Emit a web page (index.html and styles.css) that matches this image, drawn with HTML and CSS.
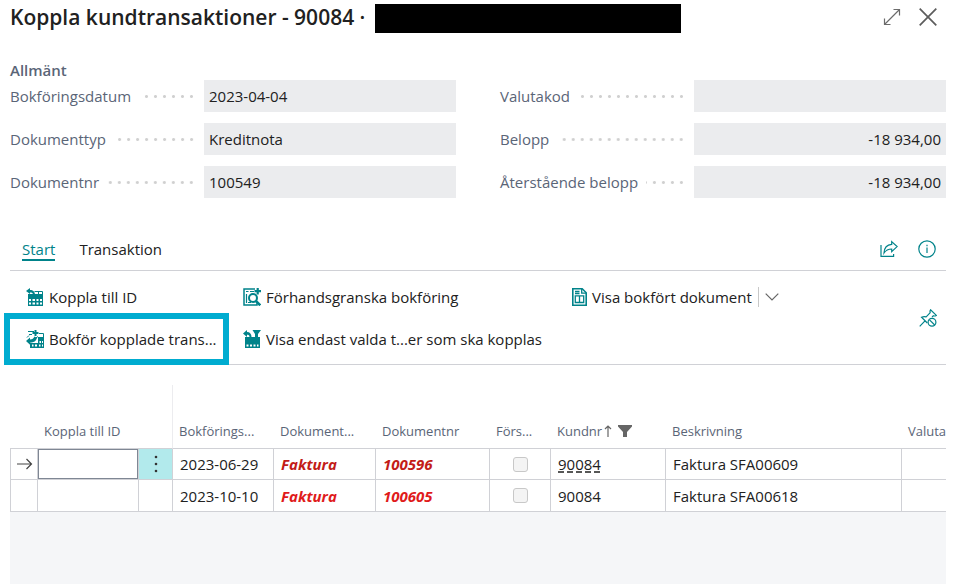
FILE: index.html
```html
<!DOCTYPE html>
<html lang="sv">
<head>
  <meta charset="UTF-8">
  <meta name="viewport" content="width=device-width, initial-scale=1.0">
  <title>Koppla kundtransaktioner</title>
  <link rel="stylesheet" href="styles.css">
</head>
<body>
  <div class="dialog">
    <!-- Title bar -->
    <header class="titlebar">
      <h1>Koppla kundtransaktioner - 90084 ·</h1>
      <div class="redacted"></div>
      <div class="window-buttons">
        <button type="button" aria-label="Expandera">
          <svg width="18" height="18" viewBox="0 0 18 18" fill="none" stroke="#6b6b6b" stroke-width="1.2"><path d="M1.5 16.5l15-15M10.5 1.5h6v6M1.5 10.5v6h6"/></svg>
        </button>
        <button type="button" aria-label="Stäng">
          <svg width="18" height="18" viewBox="0 0 18 18" fill="none" stroke="#5c5c5c" stroke-width="1.7"><path d="M.7.7l16.6 16.6M17.3.7L.7 17.3"/></svg>
        </button>
      </div>
    </header>

    <!-- General fields -->
    <section class="general">
      <h2>Allmänt</h2>
      <div class="fields">
        <div class="field">
          <label for="posting-date">Bokföringsdatum</label>
          <input id="posting-date" type="text" value="2023-04-04" readonly>
        </div>
        <div class="field">
          <label for="currency">Valutakod</label>
          <input id="currency" type="text" readonly>
        </div>
        <div class="field">
          <label for="doc-type">Dokumenttyp</label>
          <input id="doc-type" type="text" value="Kreditnota" readonly>
        </div>
        <div class="field">
          <label for="amount">Belopp</label>
          <input id="amount" class="number" type="text" value="-18 934,00" readonly>
        </div>
        <div class="field">
          <label for="doc-no">Dokumentnr</label>
          <input id="doc-no" type="text" value="100549" readonly>
        </div>
        <div class="field">
          <label for="remaining">Återstående belopp</label>
          <input id="remaining" class="number" type="text" value="-18 934,00" readonly>
        </div>
      </div>
    </section>

    <!-- Tabs -->
    <nav class="tabs">
      <button type="button" class="tab active">Start</button>
      <button type="button" class="tab">Transaktion</button>
      <div class="tab-tools">
        <button type="button" aria-label="Dela">
          <svg width="18" height="18" viewBox="0 0 18 18" fill="none" stroke="#00838a" stroke-width="1.2"><path d="M1 5v11.4h12.6V14"/><path d="M11.7 1.6l5.4 5-5.4 5V9C8.3 9 6 10 4 13c.3-5.4 3.6-8.4 7.7-8.6z"/></svg>
        </button>
        <button type="button" aria-label="Information">
          <svg width="18" height="18" viewBox="0 0 18 18" fill="none" stroke="#00838a" stroke-width="1.2"><circle cx="9" cy="9" r="8.2"/><path d="M9 7.5V13M9 4.7v1.5"/></svg>
        </button>
      </div>
    </nav>

    <!-- Actions -->
    <div class="toolbar">
      <div class="actions">
        <button type="button" class="action">
          <svg width="18" height="18" viewBox="0 0 18 18"><path fill="#00838a" fill-rule="evenodd" d="M2 6h15v12H2zM3 11v2h2v-2zM6.500 11v2h2.500v-2zM10.500 11v2h2v-2zM14 11v2h2v-2zM3 14.500v2h2v-2zM6.500 14.500v2h2.500v-2zM10.500 14.500v2h2v-2zM14 14.500v2h2v-2z"/><path fill="none" stroke="#00838a" d="M8.500 3.500h8V8M12.500 3.500V7"/><path fill="#00838a" d="M0 3l4-3v2c3 0 5 1.500 5 5H7c0-2-1-2.500-3-2.500V6z"/></svg>
          Koppla till ID
        </button>
        <button type="button" class="action">
          <svg width="18" height="18" viewBox="0 0 18 18"><path fill="none" stroke="#00838a" stroke-width="1.5" d="M12 1H1v16h13v-2"/><path fill="none" stroke="#00838a" stroke-width="1.2" d="M3 3.500h2.500M7 3.500h4M3.500 6v9M5 14.500h3"/><circle cx="10" cy="10" r="4" fill="#fff" stroke="#00838a" stroke-width="2"/><path stroke="#00838a" stroke-width="2.600" d="M12.800 12.800L17.300 17.300"/><path stroke="#00838a" stroke-width="2.200" d="M14.700 0v6.500M11.500 3.200H18"/></svg>
          Förhandsgranska bokföring
        </button>
        <div class="split-action">
          <button type="button" class="action">
            <svg width="15" height="18" viewBox="0 0 15 18"><path fill="#fff" stroke="#00838a" stroke-width="1.6" d="M.8.8h9.400l4 4v12.400H.8z"/><path fill="none" stroke="#00838a" stroke-width="1.3" d="M9.700 1v4.200H14M3 3.500h4.500M3 5.500h4.500M3.300 7.800h8.400v6.700H3.300zM7.500 8v6.500"/></svg>
            Visa bokfört dokument
          </button>
          <button type="button" class="more" aria-label="Fler alternativ">
            <svg width="14" height="8" viewBox="0 0 14 8" fill="none" stroke="#666" stroke-width="1.2"><path d="M.7.7L7 7 13.3.7"/></svg>
          </button>
        </div>
        <button type="button" class="action highlighted">
          <svg width="18" height="18" viewBox="0 0 18 18"><path fill="none" stroke="#00838a" d="M13 3.500h4.500V8M2 1.500h6M3 4.500h3M1 7.500l2-2M9 8.500l3-2"/><path fill="#00838a" fill-rule="evenodd" d="M12 7h6v11H4v-5h8zM13.500 11v2H15v-2zM16 11v2h1v-2zM6 14.500v2h1.500v-2zM9 14.500v2h2v-2zM13 14.500v2h1.500v-2zM16 14.500v2h1v-2z"/><path stroke="#00838a" stroke-width="2" d="M9.500 0v6M6.500 3h6"/><path fill="#00838a" d="M0 11l4-3.500v2c2.500 0 3.500-1 4.500-3L11 8c-1 3-3 4.500-7 4.700v2z"/></svg>
          Bokför kopplade trans...
        </button>
        <button type="button" class="action">
          <svg width="18" height="18" viewBox="0 0 18 18"><path fill="#00838a" fill-rule="evenodd" d="M2 7h15v11H2zM3.500 14.500v2h2v-2zM7 14.500v2h2v-2zM10.500 14.500v2h2v-2zM14 14.500v2h1.500v-2z"/><path fill="#00838a" d="M9.500 0H18l-3 4v4h-3V4zM0 3.500L4 0v2c3 0 4.500 2 4.500 5H6.500C6.500 5 5.500 4.700 4 4.700V7z"/></svg>
          Visa endast valda t...er som ska kopplas
        </button>
      </div>
      <button type="button" class="pin" aria-label="Lossa">
        <svg width="18" height="18" viewBox="0 0 18 18" fill="none" stroke="#00838a" stroke-width="1.2"><path d="M.7 17.300l5.300-5.500M8.300 14L2.500 8.200c2-.9 3.500-.8 4.700-.3l4-4.200c-.4-1-.2-2 .4-2.900l5.700 5.600c-1 .6-2 .8-3 .4L13 8.200"/><circle cx="13" cy="13.300" r="3.900"/><path d="M10.300 10.600l5.400 5.400"/></svg>
      </button>
    </div>

    <!-- Lines -->
    <div class="grid">
      <table>
        <colgroup>
          <col class="col-marker">
          <col class="col-id">
          <col class="col-menu">
          <col class="col-date">
          <col class="col-type">
          <col class="col-no">
          <col class="col-check">
          <col class="col-customer">
          <col class="col-desc">
          <col>
        </colgroup>
        <thead>
          <tr>
            <th></th>
            <th>Koppla till ID</th>
            <th class="frozen-edge"></th>
            <th>Bokförings...</th>
            <th>Dokument...</th>
            <th>Dokumentnr</th>
            <th>Förs...</th>
            <th>
              <span class="sorted">Kundnr
                <svg width="8" height="12" viewBox="0 0 8 12" fill="none" stroke="#666" stroke-width="1.2"><path d="M4 12V1M1 4l3-3 3 3"/></svg>
                <svg class="filter" width="14" height="12" viewBox="0 0 14 12" fill="#666"><path d="M0 0h14v1.500L9 7v5H5V7L0 1.500z"/></svg>
              </span>
            </th>
            <th>Beskrivning</th>
            <th>Valutakod</th>
          </tr>
        </thead>
        <tbody>
          <tr class="selected">
            <td class="marker">
              <svg width="16" height="12" viewBox="0 0 16 12" fill="none" stroke="#444" stroke-width="1.2"><path d="M0 6h14.500M9.500 1l5 5-5 5"/></svg>
            </td>
            <td class="edit"><input type="text" aria-label="Koppla till ID"></td>
            <td class="menu">
              <button type="button" aria-label="Visa fler alternativ">
                <svg width="4" height="18" viewBox="0 0 4 18" fill="#333"><circle cx="2" cy="2" r="1.300"/><circle cx="2" cy="9" r="1.300"/><circle cx="2" cy="16" r="1.300"/></svg>
              </button>
            </td>
            <td>2023-06-29</td>
            <td class="overdue">Faktura</td>
            <td class="overdue">100596</td>
            <td class="check"><input type="checkbox" aria-label="Försenad" disabled></td>
            <td><a href="#">90084</a></td>
            <td>Faktura SFA00609</td>
            <td></td>
          </tr>
          <tr>
            <td></td>
            <td></td>
            <td></td>
            <td>2023-10-10</td>
            <td class="overdue">Faktura</td>
            <td class="overdue">100605</td>
            <td class="check"><input type="checkbox" aria-label="Försenad" disabled></td>
            <td>90084</td>
            <td>Faktura SFA00618</td>
            <td></td>
          </tr>
        </tbody>
      </table>
    </div>
  </div>
</body>
</html>
```
FILE: styles.css
```css
* {
  box-sizing: border-box;
}

body {
  margin: 0;
  font-family: "Open Sans", "Noto Sans", sans-serif;
  font-size: 15px;
  line-height: 20px;
  color: #212121;
  background: #fff;
}

button,
input {
  font: inherit;
  color: inherit;
}

button {
  padding: 0;
  border: none;
  background: none;
  cursor: pointer;
}

svg {
  display: block;
  flex: none;
}

.dialog {
  display: flex;
  flex-direction: column;
  min-height: 100vh;
  padding: 0 9px 0 10px;
}

/* Title bar */
.titlebar {
  display: flex;
  align-items: center;
  height: 36px;
}

.titlebar h1 {
  margin: 0 10px 0 0;
  padding-bottom: 2px;
  font-size: 21px;
  line-height: 32px;
  font-weight: 600;
  white-space: nowrap;
}

.redacted {
  width: 306px;
  height: 29px;
  background: #000;
}

.window-buttons {
  display: flex;
  gap: 18px;
  margin-left: auto;
  padding: 0 9px 2px 0;
}

/* General fields */
.general {
  padding-top: 24px;
}

.general h2 {
  margin: 0;
  font-size: 15px;
  line-height: 20px;
  font-weight: 600;
  color: #5a6577;
}

.fields {
  display: grid;
  grid-template-columns: 1fr 1fr;
  gap: 11px 44px;
}

.field {
  display: grid;
  grid-template-columns: 194px 1fr;
}

.field label {
  display: flex;
  align-items: center;
  gap: 8px;
  padding-right: 8px;
  color: #5a6577;
  white-space: nowrap;
}

.field label::after {
  content: "";
  flex: 1;
  height: 3px;
  background: radial-gradient(circle, #d0d0d0 1px, transparent 2px) right center / 9px 3px;
}

.field input {
  width: 100%;
  height: 32px;
  padding: 0 5px;
  border: none;
  background: #ebecee;
}

.field .number {
  text-align: right;
}

/* Tabs */
.tabs {
  display: flex;
  align-items: center;
  gap: 24px;
  height: 44px;
  margin-top: 29px;
  padding: 0 10px 0 12px;
  border-bottom: 1px solid #d0d1d6;
}

.tab {
  border-top: 2px solid transparent;
  border-bottom: 2px solid transparent;
}

.tab.active {
  color: #00838a;
  border-bottom-color: #00838a;
}

.tab-tools {
  display: flex;
  gap: 20px;
  margin-left: auto;
}

/* Actions */
.toolbar {
  display: flex;
  align-items: center;
  justify-content: space-between;
  padding: 5px 9px 4px 16px;
  border-bottom: 1px solid #d0d1d6;
}

.actions {
  display: grid;
  grid-template-columns: 217px 329px auto;
  grid-auto-rows: 42px;
}

.action {
  display: flex;
  align-items: center;
  gap: 5px;
  white-space: nowrap;
}

.split-action {
  display: flex;
  align-items: center;
}

.more {
  height: 20px;
  margin-left: 6px;
  padding-left: 6px;
  border-left: 1px solid #c8c8c8;
}

.highlighted {
  position: relative;
}

.highlighted::after {
  content: "";
  position: absolute;
  inset: -5px 14px -5px -22px;
  border: 6px solid #00acd0;
}

/* Lines */
.grid {
  flex: 1;
  margin-top: 20px;
  overflow: hidden;
  background: #f5f6f8;
}

table {
  width: 100%;
  table-layout: fixed;
  border-collapse: separate;
  border-spacing: 0;
  background: #fff;
}

.col-marker {
  width: 28px;
}

.col-id,
.col-date {
  width: 101px;
}

.col-menu {
  width: 34px;
}

.col-type {
  width: 102px;
}

.col-no {
  width: 114px;
}

.col-check {
  width: 61px;
}

.col-customer {
  width: 115px;
}

.col-desc {
  width: 236px;
}

th {
  height: 64px;
  padding: 0 0 7px 6px;
  border-bottom: 1px solid #d0d1d6;
  font-size: 13px;
  font-weight: 400;
  text-align: left;
  vertical-align: bottom;
  white-space: nowrap;
  overflow: hidden;
  color: #5a6577;
}

.frozen-edge {
  border-right: 1px solid #ececef;
}

.sorted {
  display: flex;
  align-items: center;
  gap: 2px;
}

.filter {
  margin-left: 4px;
}

td {
  height: 32px;
  padding: 0 0 0 7px;
  border-right: 1px solid #d0d1d6;
  border-bottom: 1px solid #d0d1d6;
  white-space: nowrap;
}

.selected td {
  height: 31px;
}

td:first-child {
  border-left: 1px solid #d0d1d6;
}

td:last-child {
  border-right: none;
}

td.marker {
  padding-left: 6px;
}

td.edit,
td.menu,
td.check {
  padding: 0;
}

.edit input {
  display: block;
  width: 100%;
  height: 30px;
  border: 1px solid #7f8794;
  background: #fff;
}

.menu {
  background: #b2eaec;
}

.menu button {
  display: flex;
  align-items: center;
  justify-content: center;
  width: 100%;
  height: 30px;
}

.overdue {
  font-weight: 700;
  font-style: italic;
  color: #e01b1b;
}

.selected .overdue {
  color: #c31c18;
}

.check input {
  display: block;
  appearance: none;
  width: 15px;
  height: 15px;
  margin: 0 auto;
  border: 1px solid #c8c8c8;
  border-radius: 3px;
  background: #f4f4f4;
}

td a {
  color: inherit;
  text-decoration: underline dashed;
  text-underline-offset: 2px;
}
```
